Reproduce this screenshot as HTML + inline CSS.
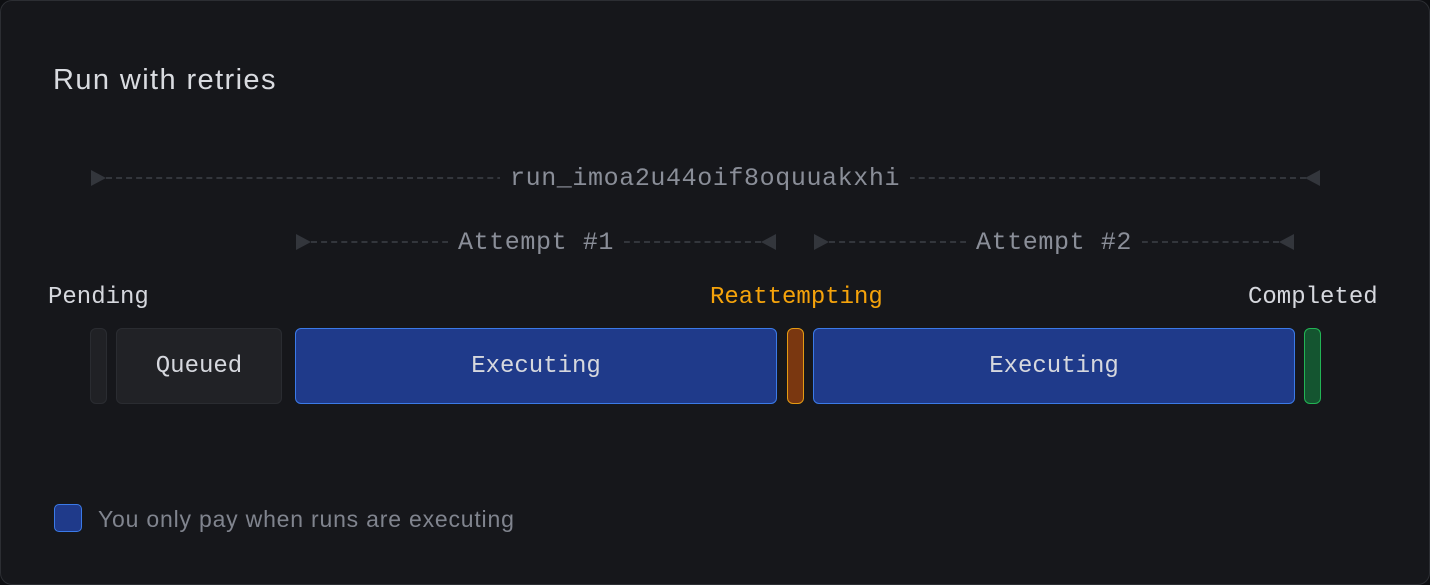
<!DOCTYPE html>
<html><head><meta charset="utf-8"><style>
html,body{margin:0;padding:0;background:#0e0f12;width:1430px;height:585px;overflow:hidden}
.card{position:absolute;left:0;top:0;width:1428px;height:583px;border:1px solid #2c2e33;border-radius:12px;background:#16171b}
.a{position:absolute}
.mono{font-family:"Liberation Mono",monospace;font-size:24px;letter-spacing:0;white-space:nowrap}
.big{font-size:25px;letter-spacing:0.6px}
.dash{position:absolute;height:0;border-top:2px dashed #33363c}
.tr{position:absolute;width:0;height:0;border-top:8px solid transparent;border-bottom:8px solid transparent}
.r{border-left:15px solid #33363c}
.l{border-right:15px solid #33363c}
.bar{position:absolute;top:328px;height:76px;border-radius:6px;box-sizing:border-box;display:flex;align-items:center;justify-content:center;color:#d6d8de}
.ex{background:#1f3a8a;border:1px solid #3b7ae8}
.lab{position:absolute;background:#16171b;padding:0 10px;color:#8a8e98;line-height:30px}
</style></head><body>
<div class="card"></div>
<div class="a" style="left:53px;top:64px;font:29px 'Liberation Sans',sans-serif;letter-spacing:1.4px;color:#d9dbe0">Run with retries</div>

<div class="tr r" style="left:91px;top:170px"></div>
<div class="dash" style="left:106px;top:177px;width:1200px"></div>
<div class="tr l" style="left:1305px;top:170px"></div>
<div class="lab mono big" style="left:500px;top:164px">run_imoa2u44oif8oquuakxhi</div>

<div class="tr r" style="left:296px;top:234px"></div>
<div class="dash" style="left:311px;top:241px;width:450px"></div>
<div class="tr l" style="left:761px;top:234px"></div>
<div class="lab mono big" style="left:448px;top:228px">Attempt #1</div>

<div class="tr r" style="left:814px;top:234px"></div>
<div class="dash" style="left:829px;top:241px;width:450px"></div>
<div class="tr l" style="left:1279px;top:234px"></div>
<div class="lab mono big" style="left:966px;top:228px">Attempt #2</div>

<div class="a mono" style="left:48px;top:284px;color:#d6d8de">Pending</div>
<div class="a mono" style="left:710px;top:284px;color:#f5a30b">Reattempting</div>
<div class="a mono" style="left:1248px;top:284px;color:#d6d8de">Completed</div>

<div class="bar" style="left:90px;width:17px;background:#202125;border:1px solid #2a2c31"></div>
<div class="bar mono" style="left:116px;width:166px;background:#212226;border:1px solid #2a2c31">Queued</div>
<div class="bar ex mono" style="left:295px;width:482px">Executing</div>
<div class="bar" style="left:787px;width:17px;background:#7a3710;border:1px solid #e59a12"></div>
<div class="bar ex mono" style="left:813px;width:482px">Executing</div>
<div class="bar" style="left:1304px;width:17px;background:#145530;border:1px solid #22b455"></div>

<div class="a" style="left:54px;top:504px;width:28px;height:28px;box-sizing:border-box;border-radius:5px;background:#1f3a8a;border:1px solid #3b7ae8"></div>
<div class="a" style="left:98px;top:506px;font:23px 'Liberation Sans',sans-serif;letter-spacing:0.8px;color:#80848e;white-space:nowrap">You only pay when runs are executing</div>
</body></html>
